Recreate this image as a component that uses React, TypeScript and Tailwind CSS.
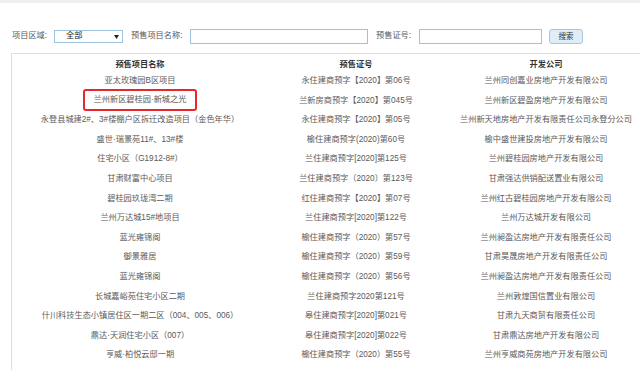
import React from "react";

const rows: [string, string, string][] = [
  ["亚太玫瑰园B区项目", "永住建商预字【2020】第06号", "兰州同创嘉业房地产开发有限公司"],
  ["兰州新区碧桂园·新城之光", "兰新房商预字【2020】第045号", "兰州新区碧盈房地产开发有限公司"],
  ["永登县城建2#、3#楼棚户区拆迁改造项目（金色年华）", "永住建商预字【2020】第05号", "兰州新天地房地产开发有限责任公司永登分公司"],
  ["盛世·瑞景苑11#、13#楼", "榆住建商预字(2020)第60号", "榆中盛世建投房地产开发有限公司"],
  ["住宅小区（G1912-8#）", "兰住建商预字[2020]第125号", "兰州碧桂园房地产开发有限公司"],
  ["甘肃财富中心项目", "兰住建商预字（2020）第123号", "甘肃强达供销配送置业有限公司"],
  ["碧桂园玖珑湾二期", "红住建商预字【2020】第07号", "兰州红古碧桂园房地产开发有限公司"],
  ["兰州万达城15#地项目", "兰住建商预字[2020]第122号", "兰州万达城开发有限公司"],
  ["蓝光雍锦阁", "榆住建商预字（2020）第57号", "兰州昶盈达房地产开发有限责任公司"],
  ["御景雅居", "榆住建商预字（2020）第59号", "甘肃昊晟房地产开发有限责任公司"],
  ["蓝光雍锦阁", "榆住建商预字（2020）第56号", "兰州昶盈达房地产开发有限责任公司"],
  ["长城嘉峪苑住宅小区二期", "兰住建商预字2020第121号", "兰州敦煌国信置业有限公司"],
  ["什川科技生态小镇居住区一期二区（004、005、006）", "皋住建商预字[2020]第021号", "甘肃九天商贸有限责任公司"],
  ["鼎达·天润住宅小区（007）", "皋住建商预字[2020]第022号", "甘肃鼎达房地产开发有限公司"],
  ["亨威·柏悦云邸一期", "榆住建商预字（2020）第55号", "兰州亨威商苑房地产开发有限公司"],
];

const font = "font-['Liberation_Sans','Noto_Sans_CJK_SC',sans-serif]";

export default function App() {
  return (
    <div className={`w-[640px] h-[370px] overflow-hidden bg-white ${font} text-[8.2px] text-[#5a5a5a]`}>
      <div className="h-[3px] bg-[#efefef]" />

      {/* filter bar */}
      <div className="flex items-center h-[13px] mt-[27px] pl-[12px]">
        <span className="w-[42px]">项目区域:</span>
        <div className="flex items-center justify-between w-[69px] h-[13px] border border-[#9fc3dc] pl-[11px] pr-[3px] text-[#222]">
          <span>全部</span>
          <svg width="5" height="4" viewBox="0 0 5 4">
            <path d="M0 0 L5 0 L2.5 4 Z" fill="#222" />
          </svg>
        </div>
        <span className="ml-[8px] w-[59px]">预售项目名称:</span>
        <div className="w-[178px] h-[15px] border border-[#9fc3dc]" />
        <span className="ml-[8px] w-[43px]">预售证号:</span>
        <div className="w-[123px] h-[15px] border border-[#9fc3dc]" />
        <button className="ml-[7px] w-[34px] h-[15px] rounded-[3px] border border-[#a7c6dc] bg-[#dfedf8] text-[#333] text-[7.5px] leading-none">
          搜索
        </button>
      </div>

      {/* table */}
      <div className="mt-[10px] ml-[11px] border-t border-l border-[#cfe2f1] pl-[6px] pt-[5px]">
        <div className="grid grid-cols-[244px_188px_192px] text-center">
          <div className="h-[12px] leading-[12px] font-bold text-[#333]">预售项目名称</div>
          <div className="h-[12px] leading-[12px] font-bold text-[#333]">预售证号</div>
          <div className="h-[12px] leading-[12px] font-bold text-[#333]">开发公司</div>
          {rows.map((r, i) => (
            <React.Fragment key={i}>
              <div className="h-[19.6px] leading-[19.6px] flex justify-center items-center whitespace-nowrap">
                {i === 1 ? (
                  <span className="border-2 border-[#e8262b] rounded-[3px] px-[9px] h-[22px] leading-[18px] -mt-[1px]">{r[0]}</span>
                ) : (
                  r[0]
                )}
              </div>
              <div className="h-[19.6px] leading-[19.6px] whitespace-nowrap">{r[1]}</div>
              <div className="h-[19.6px] leading-[19.6px] whitespace-nowrap">{r[2]}</div>
            </React.Fragment>
          ))}
        </div>
        <div className="h-px bg-[#e6e6e6] mt-[5px]" />
      </div>
    </div>
  );
}
